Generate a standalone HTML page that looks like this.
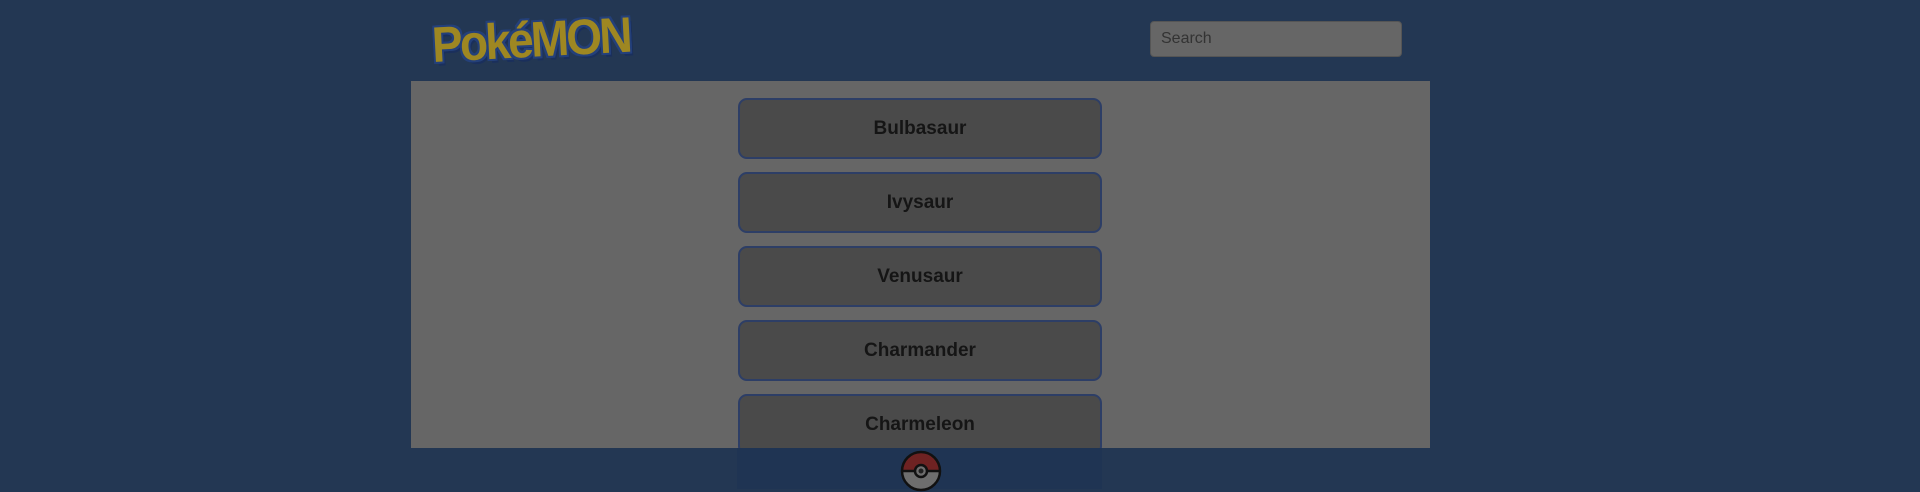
<!DOCTYPE html>
<html><head><style>
html,body{margin:0;padding:0;width:1920px;height:489px;overflow:hidden;background:#233753;font-family:"Liberation Sans",sans-serif}
.logo{position:absolute;left:432px;top:16px;font-size:50px;font-weight:bold;color:#9e8722;letter-spacing:-3px;transform:rotate(-3deg) scaleX(0.92);transform-origin:left center;font-family:"Liberation Sans",sans-serif;text-shadow:2px 0 #24407a,-2px 0 #24407a,0 2px #24407a,0 -2px #24407a,2px 2px #24407a,-2px -2px #24407a,2px -2px #24407a,-2px 2px #24407a,3px 4px #1a2f5c}
.search{position:absolute;left:1150px;top:21px;width:252px;height:36px;background:#666;border:1px solid #555;border-radius:4px;box-sizing:border-box;color:#333;font-size:16px;line-height:34px;padding-left:10px}
.panel{position:absolute;left:411px;top:81px;width:1019px;height:367px;background:#666;overflow:hidden}
.btn{position:absolute;left:327px;width:364px;height:61px;box-sizing:border-box;background:#4a4a4a;border:2px solid #2d3e66;border-radius:9px;text-align:center;line-height:57px;font-weight:bold;font-size:19px;color:#151515}
.bot{position:absolute;left:737px;top:448px;width:365px;height:41px;background:#1f3453}
.ball{position:absolute;left:900px;top:450px}
</style></head><body>
<div class="logo">PokéMON</div>
<div class="search">Search</div>
<div class="panel">
<div class="btn" style="top:17px">Bulbasaur</div>
<div class="btn" style="top:91px">Ivysaur</div>
<div class="btn" style="top:165px">Venusaur</div>
<div class="btn" style="top:239px">Charmander</div>
<div class="btn" style="top:313px">Charmeleon</div>
</div>
<div class="bot"></div>
<svg class="ball" width="42" height="42" viewBox="0 0 42 42">
<path d="M2 21a19 19 0 0 1 38 0z" fill="#6e2222"/>
<path d="M2 21a19 19 0 0 0 38 0z" fill="#6e6e6e"/>
<circle cx="21" cy="21" r="19" fill="none" stroke="#111" stroke-width="2.5"/>
<line x1="2" y1="21" x2="40" y2="21" stroke="#111" stroke-width="2.5"/>
<circle cx="21" cy="21" r="6" fill="#6e6e6e" stroke="#111" stroke-width="2.5"/>
<circle cx="21" cy="21" r="2.5" fill="#222"/>
</svg>
</body></html>
